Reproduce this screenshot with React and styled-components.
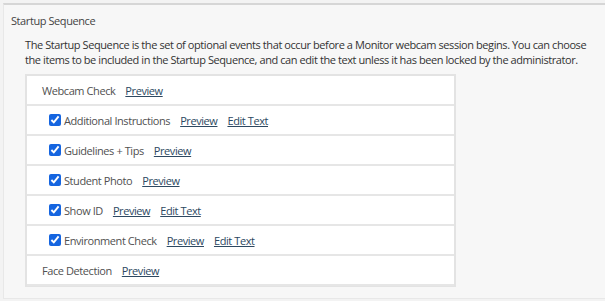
import React from 'react';
import styled, { createGlobalStyle } from 'styled-components';

const GlobalStyle = createGlobalStyle`
  html, body {
    margin: 0;
    padding: 0;
    background: #f3f3f3;
  }
  body {
    font-family: "Open Sans", "Noto Sans", sans-serif;
    letter-spacing: -0.42px;
  }
`;

const Page = styled.div`
  padding: 3px 0 0 3px;
  height: 301px;
  box-sizing: border-box;
`;

const Panel = styled.section`
  background: #f7f7f7;
  border-top: 2px solid #d6d6d6;
  border-left: 1px solid #e8e8e8;
  border-bottom: 1px solid #e8e8e8;
  height: 296px;
  box-sizing: border-box;
  padding: 8px 0 0 7px;
`;

const Title = styled.h3`
  margin: 0;
  font-size: 11px;
  font-weight: 400;
  line-height: 15px;
  color: #444;
`;

const Intro = styled.p`
  margin: 9px 0 0 14px;
  font-size: 11px;
  line-height: 15px;
  color: #333;
  width: 575px;
`;

const Card = styled.div`
  margin: 7px 0 0 14px;
  width: 431px;
  background: #fff;
  border: 2px solid #e3e3e3;
  border-bottom-width: 1px;
  box-sizing: border-box;
`;

const Row = styled.div`
  display: flex;
  align-items: center;
  height: 30px;
  box-sizing: border-box;
  padding-left: ${p => (p.$check ? '22px' : '15px')};
  border-bottom: 2px solid #e6e6e6;
  font-size: 11px;
  color: #505050;
`;

const Check = styled.input`
  width: 12px;
  height: 12px;
  margin: 0 3px 0 0;
  accent-color: #1565e0;
`;

const Label = styled.span`
  margin-right: 10px;
`;

const Link = styled.a`
  color: #2d4861;
  text-decoration: underline;
  margin-right: 10px;
  cursor: pointer;
`;

const items = [
  { name: 'Webcam Check', edit: false, check: false },
  { name: 'Additional Instructions', edit: true, check: true },
  { name: 'Guidelines + Tips', edit: false, check: true },
  { name: 'Student Photo', edit: false, check: true },
  { name: 'Show ID', edit: true, check: true },
  { name: 'Environment Check', edit: true, check: true },
  { name: 'Face Detection', edit: false, check: false },
];

export default function App() {
  return (
    <>
      <GlobalStyle />
      <Page>
        <Panel>
          <Title>Startup Sequence</Title>
          <Intro>
            The Startup Sequence is the set of optional events that occur before a Monitor webcam session begins. You can choose
            the items to be included in the Startup Sequence, and can edit the text unless it has been locked by the administrator.
          </Intro>
          <Card>
            {items.map(item => (
              <Row key={item.name} $check={item.check}>
                {item.check && <Check type="checkbox" defaultChecked />}
                <Label>{item.name}</Label>
                <Link>Preview</Link>
                {item.edit && <Link>Edit Text</Link>}
              </Row>
            ))}
          </Card>
        </Panel>
      </Page>
    </>
  );
}
